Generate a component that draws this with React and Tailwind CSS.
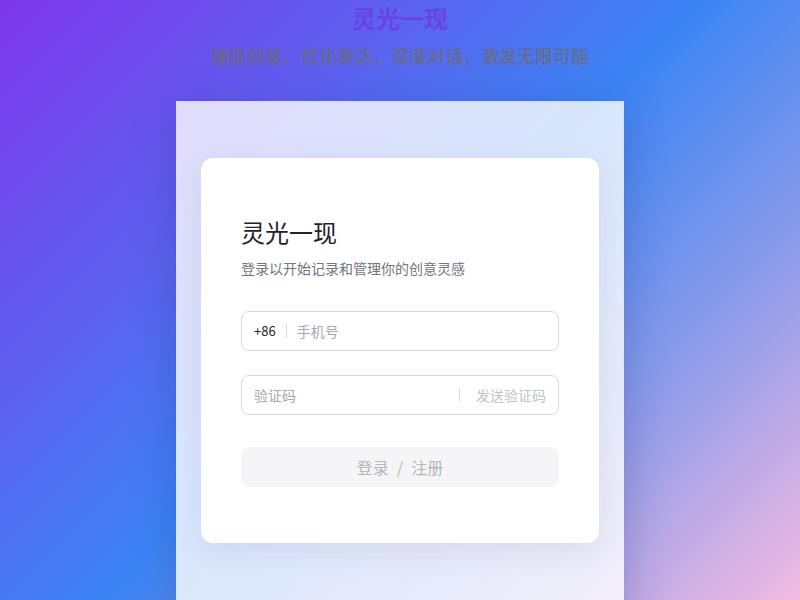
import React from 'react';

const font = { fontFamily: '"Noto Sans CJK SC", "Noto Sans", sans-serif' };

export default function App() {
  return (
    <div
      style={font}
      className="relative h-[600px] w-[800px] overflow-hidden bg-[linear-gradient(135deg,#7e37ea_0%,#5b63f0_30%,#3b84f4_50%,#8f9ce9_75%,#f2bbe2_100%)]"
    >
      {/* Header */}
      <div className="flex flex-col items-center pt-[2px]">
        <h1 className="text-[24px] font-bold leading-[32px] text-[#6b42e4]">灵光一现</h1>
        <p className="mt-[7px] text-[18px] leading-[28px] text-[#6a6a72]">捕捉创意，优化表达，深度对话，激发无限可能</p>
      </div>

      {/* Panel */}
      <div className="mx-auto mt-[32px] h-[540px] w-[448px] bg-white/80 px-[25px] pt-[57px] shadow-[0_10px_40px_rgba(30,40,120,0.25)]">
        <div className="rounded-[12px] bg-white px-[40px] pb-[56px] pt-[58px] shadow-[0_8px_30px_rgba(80,90,160,0.12)]">
          <h2 className="text-[24px] leading-[32px] text-[#1f2329]">灵光一现</h2>
          <p className="mt-[10px] text-[14px] leading-[20px] text-[#70757f]">登录以开始记录和管理你的创意灵感</p>

          {/* Phone */}
          <div className="mt-[33px] flex h-[40px] items-center rounded-[8px] border border-[#d4d6db] px-[12px]">
            <span className="text-[13px] text-[#1f2329]">+86</span>
            <span className="mx-[10px] h-[14px] w-px bg-[#d8dadf]" />
            <span className="text-[14px] text-[#a3a7b0]">手机号</span>
          </div>

          {/* Code */}
          <div className="mt-[24px] flex h-[40px] items-center rounded-[8px] border border-[#d4d6db] pl-[12px] pr-[12px]">
            <span className="flex-1 text-[14px] text-[#a3a7b0]">验证码</span>
            <span className="mr-[16px] h-[14px] w-px bg-[#d8dadf]" />
            <span className="text-[14px] text-[#c0c3ca]">发送验证码</span>
          </div>

          {/* Submit */}
          <button className="mt-[32px] flex h-[40px] w-full items-center justify-center rounded-[8px] bg-[#f5f5f7] text-[16px] text-[#b4b6bd]">
            登录 <span className="mx-[8px]">/</span> 注册
          </button>
        </div>
      </div>
    </div>
  );
}
